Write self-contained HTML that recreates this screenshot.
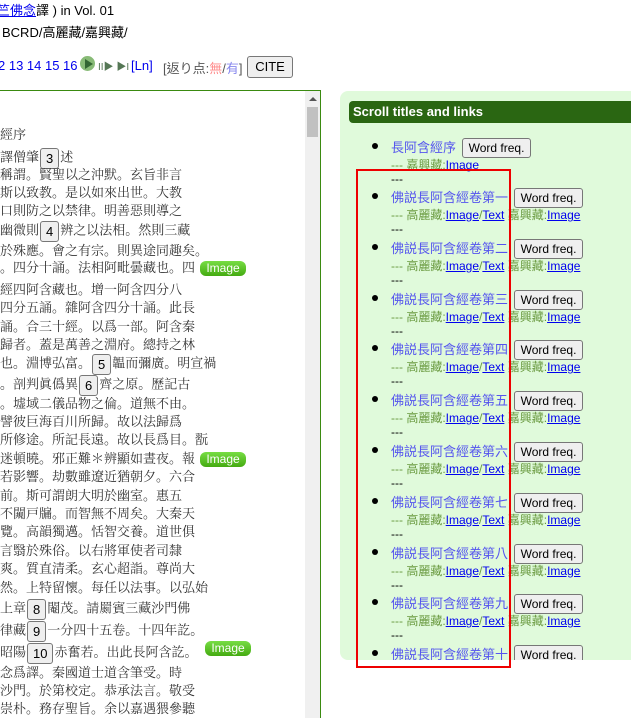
<!DOCTYPE html>
<html><head><meta charset="utf-8"><style>
body{margin:0;width:631px;height:718px;overflow:hidden;background:#fff;font-family:"Liberation Sans","Noto Sans CJK TC",sans-serif;position:relative}
.a{position:absolute;white-space:nowrap}
.t{font-family:"Liberation Serif","Noto Serif CJK SC",serif;font-size:13px;color:#333;line-height:18px}
.b{display:inline-block;border:1px solid #777;border-radius:3px;background:#efefef;font-family:"Liberation Sans",sans-serif;font-size:13px;color:#000;padding:0 5px;line-height:19px;vertical-align:middle;margin:0 1px}
.img{position:absolute;background:linear-gradient(#7d4,#4a1);color:#fff;border-radius:6px;font-size:12px;width:46px;height:15px;line-height:15px;text-align:center;font-family:"Liberation Sans",sans-serif}
.r{font-size:12px;color:#6a9a40}
.r a{color:#00e;text-decoration:underline}
.ti{color:#55e;font-size:13px}
.wf{display:inline-block;border:1px solid #777;border-radius:3px;background:#efefef;font-size:12px;color:#000;padding:0 6px;line-height:18px;margin-left:2px}
.dot{position:absolute;width:6px;height:6px;border-radius:3px;background:#000}
</style></head><body>
<div class="a" style="left:-3px;top:0px;font-size:13px"><span style="color:#00e;text-decoration:underline">竺佛念</span>譯 ) in Vol. 01</div>
<div class="a" style="left:2px;top:22px;font-size:13px">BCRD/高麗藏/嘉興藏/</div>
<div class="a" style="left:-2px;top:58px;font-size:13px;color:#00e">2 13 14 15 16</div>
<div class="a" style="left:80px;top:56px;width:15px;height:15px;border-radius:8px;background:#8b7"></div>
<div class="a" style="left:85px;top:59px;width:0;height:0;border-left:8px solid #363;border-top:5px solid transparent;border-bottom:5px solid transparent"></div>
<div class="a" style="left:98px;top:58px;font-size:10px;color:#575">II▶ ▶I</div>
<div class="a" style="left:131px;top:58px;font-size:13px;color:#00e">[Ln]</div>
<div class="a" style="left:163px;top:58px;font-size:13px;color:#555">[返り点:<span style="color:#f88">無</span>/<span style="color:#88e">有</span>]</div>
<div class="a" style="left:247px;top:56px;width:44px;height:20px;border:1px solid #777;border-radius:3px;background:#efefef;font-size:13px;text-align:center;line-height:20px">CITE</div>
<div class="a" style="left:0;top:90px;width:320px;height:1px;background:#3a8a10"></div>
<div class="a" style="left:320px;top:90px;width:1px;height:628px;background:#3a8a10"></div>
<div class="a" style="left:305px;top:91px;width:15px;height:627px;background:#f0f0f0"></div>
<div class="a" style="left:307px;top:107px;width:11px;height:30px;background:#c1c1c1"></div>
<div class="a" style="left:309px;top:97px;width:0;height:0;border-bottom:4px solid #555;border-left:4px solid transparent;border-right:4px solid transparent"></div>
<div class="t a" style="left:0;top:126px">經序</div>
<div class="t a" style="left:0;top:148px">譯僧肇<span class="b">3</span>述</div>
<div class="t a" style="left:0;top:166px">稱謂。賢聖以之沖默。玄旨非言</div>
<div class="t a" style="left:0;top:184px">斯以致教。是以如來出世。大教</div>
<div class="t a" style="left:0;top:202px">口則防之以禁律。明善惡則導之</div>
<div class="t a" style="left:0;top:221px">幽微則<span class="b">4</span>辨之以法相。然則三藏</div>
<div class="t a" style="left:0;top:242px">於殊應。會之有宗。則異途同趣矣。</div>
<div class="t a" style="left:0;top:259px">。四分十誦。法相阿毗曇藏也。四</div>
<div class="img" style="left:200px;top:261px">Image</div>
<div class="t a" style="left:0;top:281px">經四阿含藏也。增一阿含四分八</div>
<div class="t a" style="left:0;top:299px">四分五誦。雜阿含四分十誦。此長</div>
<div class="t a" style="left:0;top:318px">誦。合三十經。以爲一部。阿含秦</div>
<div class="t a" style="left:0;top:336px">歸者。蓋是萬善之淵府。總持之林</div>
<div class="t a" style="left:0;top:354px">也。淵博弘富。<span class="b">5</span>韞而彌廣。明宣禍</div>
<div class="t a" style="left:0;top:375px">。剖判眞僞異<span class="b">6</span>齊之原。歷記古</div>
<div class="t a" style="left:0;top:395px">。墟域二儀品物之倫。道無不由。</div>
<div class="t a" style="left:0;top:413px">譬彼巨海百川所歸。故以法歸爲</div>
<div class="t a" style="left:0;top:431px">所修途。所記長遠。故以長爲目。翫</div>
<div class="t a" style="left:0;top:450px">迷頓曉。邪正難＊辨顯如晝夜。報</div>
<div class="img" style="left:200px;top:452px">Image</div>
<div class="t a" style="left:0;top:468px">若影響。劫數雖遼近猶朝夕。六合</div>
<div class="t a" style="left:0;top:487px">前。斯可謂朗大明於幽室。惠五</div>
<div class="t a" style="left:0;top:505px">不闚戸牖。而智無不周矣。大秦天</div>
<div class="t a" style="left:0;top:523px">覽。高韻獨邁。恬智交養。道世俱</div>
<div class="t a" style="left:0;top:542px">言翳於殊俗。以右將軍使者司隸</div>
<div class="t a" style="left:0;top:560px">爽。質直清柔。玄心超詣。尊尚大</div>
<div class="t a" style="left:0;top:579px">然。上特留懷。每任以法事。以弘始</div>
<div class="t a" style="left:0;top:599px">上章<span class="b">8</span>閹茂。請罽賓三藏沙門佛</div>
<div class="t a" style="left:0;top:621px">律藏<span class="b">9</span>一分四十五卷。十四年訖。</div>
<div class="t a" style="left:0;top:643px">昭陽<span class="b">10</span>赤奮若。出此長阿含訖。</div>
<div class="img" style="left:205px;top:641px">Image</div>
<div class="t a" style="left:0;top:664px">念爲譯。秦國道士道含筆受。時</div>
<div class="t a" style="left:0;top:682px">沙門。於第校定。恭承法言。敬受</div>
<div class="t a" style="left:0;top:700px">崇朴。務存聖旨。余以嘉遇猥參聽</div>

<div class="a" style="left:340px;top:91px;width:300px;height:569px;background:#e0fadb;border-radius:8px 0 0 8px"></div>
<div class="a" style="left:349px;top:101px;width:290px;height:22px;background:#2a6612;border-radius:4px 0 0 4px;color:#fff;font-weight:bold;font-size:13px;line-height:22px;padding-left:4px">Scroll titles and links</div>
<div class="dot" style="left:372px;top:143px"></div>
<div class="a ti" style="left:391px;top:137px">長阿含經序 <span class="wf">Word freq.</span></div>
<div class="a r" style="left:391px;top:156px">--- 嘉興藏:<a>Image</a></div>
<div class="a r" style="left:391px;top:172px;color:#000">---</div>

<div id="items"></div>
<script>
var n=["一","二","三","四","五","六","七","八","九","十"],h="";
for(var i=0;i<10;i++){var y=196+i*50.8;
h+='<div class="dot" style="left:372px;top:'+(y-3)+'px"></div>';
h+='<div class="a ti" style="left:391px;top:'+(y-9)+'px">佛説長阿含經卷第'+n[i]+' <span class="wf">Word freq.</span></div>';
if(i<9){h+='<div class="a r" style="left:391px;top:'+(y+10)+'px">--- 高麗藏:<a>Image</a>/<a>Text</a> 嘉興藏:<a>Image</a></div>';
h+='<div class="a r" style="left:391px;top:'+(y+26)+'px;color:#000">---</div>';}}
document.getElementById("items").innerHTML=h;
</script>
<div class="a" style="left:340px;top:660px;width:291px;height:58px;background:#fff"></div>
<div class="a" style="left:356px;top:169px;width:151px;height:495px;border:2px solid #e00"></div>
</body></html>
